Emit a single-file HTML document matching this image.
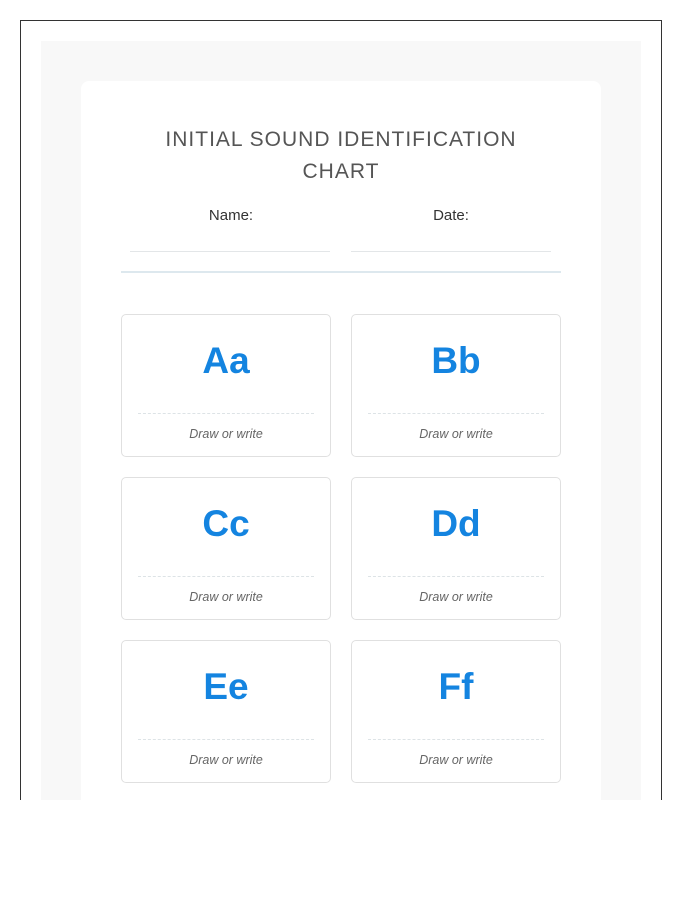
<!DOCTYPE html>
<html><head><meta charset="utf-8"><style>
*{box-sizing:border-box;margin:0;padding:0}
html,body{width:700px;height:900px;background:#fff;font-family:"Liberation Sans",sans-serif;overflow:hidden}
.frame{position:absolute;left:20px;top:20px;width:642px;height:780px;border:1px solid #333;border-bottom:none;overflow:hidden}
.gray{position:absolute;left:20px;top:20px;width:600px;height:800px;background:#f8f8f8}
.card{position:absolute;left:40px;top:40px;width:520px;height:800px;background:#fff;border-radius:8px}
h1{position:absolute;left:0;width:520px;top:43px;text-align:center;font-weight:normal;font-size:21px;line-height:32px;letter-spacing:1px;color:#555}
.lbl{position:absolute;top:126px;font-size:15px;color:#333;text-align:center;width:200px}
.ul{position:absolute;top:170px;width:200px;border-top:1px solid #e3e6e8}
.div{position:absolute;left:40px;top:190px;width:440px;border-top:2px solid #dde8ee}
.box{position:absolute;width:210px;height:143px;border:1px solid #e0e0e0;border-radius:5px;background:#fff}
.box .L{position:absolute;top:25px;width:100%;text-align:center;font-size:37px;font-weight:bold;color:#1484e0}
.box .d{position:absolute;left:16px;right:16px;top:98px;border-top:1px dashed #dde3e6}
.box .t{position:absolute;top:112px;width:100%;text-align:center;font-size:12.5px;font-style:italic;color:#666}
</style></head><body>
<div class="frame"><div class="gray"><div class="card">
<h1>INITIAL SOUND IDENTIFICATION<br>CHART</h1>
<div class="lbl" style="left:50px">Name:</div>
<div class="lbl" style="left:270px">Date:</div>
<div class="ul" style="left:49px"></div>
<div class="ul" style="left:270px"></div>
<div class="div"></div>
<div class="box" style="left:40px;top:233px"><div class="L">Aa</div><div class="d"></div><div class="t">Draw or write</div></div>
<div class="box" style="left:270px;top:233px"><div class="L">Bb</div><div class="d"></div><div class="t">Draw or write</div></div>
<div class="box" style="left:40px;top:396px"><div class="L">Cc</div><div class="d"></div><div class="t">Draw or write</div></div>
<div class="box" style="left:270px;top:396px"><div class="L">Dd</div><div class="d"></div><div class="t">Draw or write</div></div>
<div class="box" style="left:40px;top:559px"><div class="L">Ee</div><div class="d"></div><div class="t">Draw or write</div></div>
<div class="box" style="left:270px;top:559px"><div class="L">Ff</div><div class="d"></div><div class="t">Draw or write</div></div>
</div></div></div>
</body></html>
